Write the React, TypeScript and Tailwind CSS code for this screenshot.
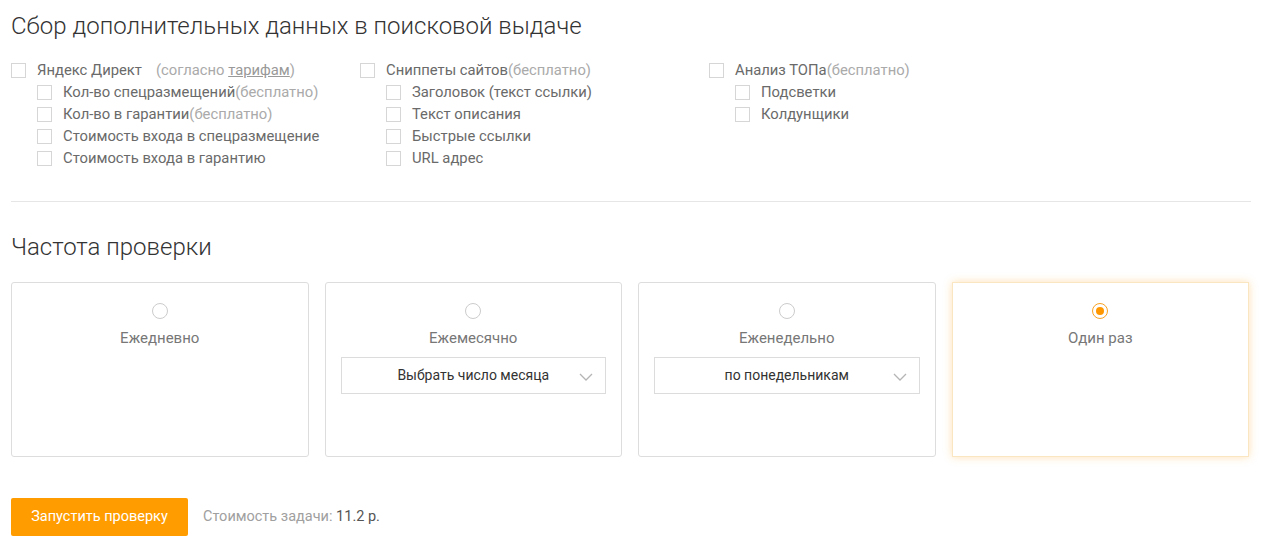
import React from "react";

type Item = { label: string; note?: React.ReactNode; sub?: boolean };

const columns: Item[][] = [
  [
    {
      label: "Яндекс Директ",
      note: (
        <span className="ml-[14px] text-[#aaaaaa]">
          (согласно <span className="underline text-[#999999]">тарифам</span>)
        </span>
      ),
    },
    { label: "Кол-во спецразмещений", note: <span className="text-[#aaaaaa]">(бесплатно)</span>, sub: true },
    { label: "Кол-во в гарантии", note: <span className="text-[#aaaaaa]">(бесплатно)</span>, sub: true },
    { label: "Стоимость входа в спецразмещение", sub: true },
    { label: "Стоимость входа в гарантию", sub: true },
  ],
  [
    { label: "Сниппеты сайтов", note: <span className="text-[#aaaaaa]">(бесплатно)</span> },
    { label: "Заголовок (текст ссылки)", sub: true },
    { label: "Текст описания", sub: true },
    { label: "Быстрые ссылки", sub: true },
    { label: "URL адрес", sub: true },
  ],
  [
    { label: "Анализ ТОПа", note: <span className="text-[#aaaaaa]">(бесплатно)</span> },
    { label: "Подсветки", sub: true },
    { label: "Колдунщики", sub: true },
  ],
];

function CheckRow({ item }: { item: Item }) {
  return (
    <div className={`flex items-center h-[22px] ${item.sub ? "pl-[26px]" : ""}`}>
      <span className="w-[15px] h-[15px] border border-[#d6d6d6] bg-white shrink-0" />
      <span className="ml-[11px] text-[#6a6a6a] whitespace-nowrap">
        {item.label}
        {item.note}
      </span>
    </div>
  );
}

function Chevron() {
  return (
    <svg width="14" height="8" viewBox="0 0 14 8" fill="none" className="absolute right-[12px] top-[15px]">
      <polyline points="1,1 7,7 13,1" stroke="#b5b5b5" strokeWidth="1.3" />
    </svg>
  );
}

function Select({ text }: { text: string }) {
  return (
    <div className="relative mx-[15px] mt-[9px] h-[37px] border border-[#dcdcdc] flex items-center justify-center text-[14px] text-[#333333]">
      <span>{text}</span>
      <Chevron />
    </div>
  );
}

function Card({ label, selected, select }: { label: string; selected?: boolean; select?: string }) {
  return (
    <div
      className={
        selected
          ? "h-[175px] bg-white border border-[#fbe6c2] shadow-[0_0_8px_rgba(255,170,40,0.35)] pt-[20px] flex flex-col"
          : "h-[175px] bg-white border border-[#dddddd] rounded-[3px] pt-[20px] flex flex-col"
      }
    >
      <div className="flex justify-center">
        {selected ? (
          <span className="w-[16px] h-[16px] rounded-full border border-[#f7a224] flex items-center justify-center">
            <span className="w-[8px] h-[8px] rounded-full bg-[#ff9800]" />
          </span>
        ) : (
          <span className="w-[16px] h-[16px] rounded-full border border-[#cccccc]" />
        )}
      </div>
      <div className="mt-[9px] leading-[20px] text-center text-[15px] text-[#777777]">{label}</div>
      {select && <Select text={select} />}
    </div>
  );
}

export default function App() {
  return (
    <div className="min-h-[553px] bg-white pl-[11px] pr-[14px] pt-[12px] font-['Roboto',sans-serif] text-[14.8px]">
      <h2 className="text-[24px] leading-[28px] font-light text-[#333333]">
        Сбор дополнительных данных в поисковой выдаче
      </h2>

      <div className="mt-[19px] grid grid-cols-[349px_349px_1fr]">
        {columns.map((col, i) => (
          <div key={i} className="flex flex-col">
            {col.map((item) => (
              <CheckRow key={item.label} item={item} />
            ))}
          </div>
        ))}
      </div>

      <div className="mt-[32px] h-px bg-[#e6e6e6]" />

      <h2 className="mt-[31px] text-[24px] leading-[28px] font-light text-[#333333]">Частота проверки</h2>

      <div className="mt-[21px] mr-[2px] grid grid-cols-4 gap-[16px]">
        <Card label="Ежедневно" />
        <Card label="Ежемесячно" select="Выбрать число месяца" />
        <Card label="Еженедельно" select="по понедельникам" />
        <Card label="Один раз" selected />
      </div>

      <div className="mt-[41px] flex items-center">
        <button className="h-[38px] w-[177px] rounded-[2px] bg-[#ff9c00] text-white text-[14.5px]">
          Запустить проверку
        </button>
        <span className="ml-[15px] text-[14.5px] text-[#a0a0a0]">
          Стоимость задачи: <span className="text-[#555555]">11.2 р.</span>
        </span>
      </div>
    </div>
  );
}
